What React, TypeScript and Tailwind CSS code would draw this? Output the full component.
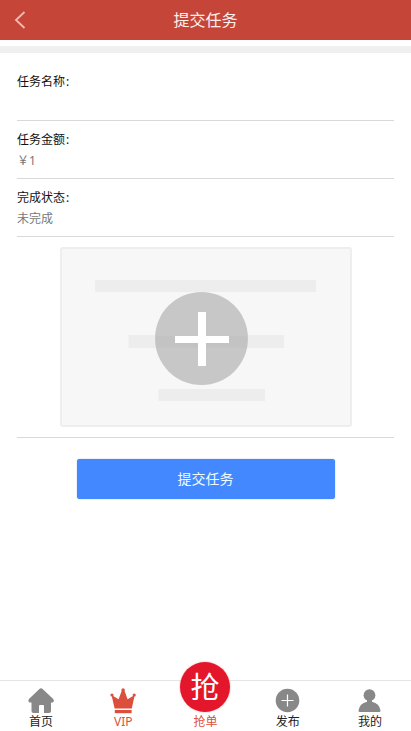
import React from "react";

function Field({ label, value }: { label: string; value: string }) {
  return (
    <div className="h-[58px] border-b border-[#d9d9d9] pt-[8px] text-[12px] leading-[21px]">
      <div className="text-[#111]">
        {label}
        <span className="ml-px font-['Noto_Sans']">:</span>
      </div>
      <div className="text-[#777]">{value}</div>
    </div>
  );
}

function UploadArt() {
  return (
    <svg width="292" height="180" viewBox="0 0 292 180" className="block">
      <rect x="1" y="1" width="290" height="178" rx="2" fill="#f7f7f7" stroke="#eeeeee" strokeWidth="2" />
      <path d="M35 33h221v12H35zM68.500 88h155.500v13H68.500zM98.500 142h106.500v12H98.500z" fill="#ededed" />
      <circle cx="141.500" cy="91.500" r="46.500" fill="#c7c7c7" />
      <path d="M96 89h91v11.500H96z" fill="#c3c3c3" />
      <path d="M138 65h8v24h23v7h-23v23h-8V96h-23v-7h23z" fill="#fff" />
    </svg>
  );
}

function HomeIcon() {
  return (
    <svg width="26" height="26" viewBox="0 0 26 26">
      <path d="M11.400 1Q13 -.500 14.600 1L25 10.800Q26.800 13 24.800 14.500H23V23Q23 25 21 25H16V18Q16 17 15 17H12Q11 17 11 18V25H5.500Q3.500 25 3.500 23V14.500H1.500Q-.600 13 1.200 10.800Z" fill="#888" />
    </svg>
  );
}

function CrownIcon() {
  return (
    <svg width="26" height="26" viewBox="0 0 26 26" fill="#dc4f3d">
      <path d="M1.500 7 8.600 11.300 12 2h2.200l3.400 9.300L24.700 7 21.800 20.500H4.600Z" />
      <circle cx="2" cy="7" r="1.600" />
      <circle cx="13.100" cy="1.900" r="1.700" />
      <circle cx="24.200" cy="7" r="1.600" />
      <path d="M4.800 22h16.800v3.200H4.800z" />
    </svg>
  );
}

function PublishIcon() {
  return (
    <svg width="26" height="26" viewBox="0 0 26 26">
      <circle cx="12.500" cy="12.500" r="11.800" fill="#888" />
      <path d="M12.500 6.500v12M6.500 12.500h12" stroke="#fff" strokeWidth="1.200" />
    </svg>
  );
}

function UserIcon() {
  return (
    <svg width="26" height="26" viewBox="0 0 26 26" fill="#888">
      <circle cx="12.500" cy="7.200" r="5.900" />
      <path d="M10 11.500h5v2.200Q22.500 15.500 23.500 22.500q.1 1.400-1 1.400H2.500q-1.100 0-1-1.400Q2.500 15.500 10 13.700z" />
    </svg>
  );
}

function Tab({ label, icon, active }: { label: string; icon: React.ReactNode; active?: boolean }) {
  return (
    <div className={"flex flex-1 flex-col items-center pt-[7px] " + (active ? "text-[#dc4f3d]" : "text-[#222]")}>
      {icon}
      <span className="text-[12px] leading-4">{label}</span>
    </div>
  );
}

export default function App() {
  return (
    <div className="flex h-[731px] w-[411px] flex-col overflow-hidden bg-white font-['Noto_Sans','Noto_Sans_CJK_SC',sans-serif]">
      <header className="flex h-10 shrink-0 items-center bg-[#c54638]">
        <div className="w-12 pl-[14px]">
          <svg width="12" height="18" viewBox="0 0 12 18" fill="none" stroke="#f3b9b2" strokeWidth="1.800">
            <path d="M10.500 1 2 9l8.500 8" />
          </svg>
        </div>
        <h1 className="flex-1 text-center text-[16px] leading-6 text-[#fff0ee]">提交任务</h1>
        <div className="w-12" />
      </header>
      <div className="mt-[6px] h-[7px] shrink-0 bg-[#f0f0f0]" />
      <main className="flex-1 px-[17px] pt-[10px]">
        <Field label="任务名称" value="" />
        <Field label="任务金额" value="￥1" />
        <Field label="完成状态" value="未完成" />
        <div className="flex h-[201px] justify-center border-b border-[#d9d9d9] pt-[10px]">
          <UploadArt />
        </div>
        <button className="mx-auto mt-[21px] block h-10 w-[258px] rounded-[3px] bg-[#4388ff] pb-[2px] text-[14px] text-[#f0fbff] shadow-[0_0_1px_#4f78b8]">
          提交任务
        </button>
      </main>
      <nav className="flex h-[51px] shrink-0 border-t border-[#e5e5e5]">
        <Tab label="首页" icon={<HomeIcon />} />
        <Tab label="VIP" icon={<CrownIcon />} active />
        <div className="flex flex-1 flex-col items-center text-[#dc4f3d]">
          <div className="-mt-[19px] mr-px flex h-[50px] w-[50px] shrink-0 items-center justify-center rounded-full bg-[#e3162c] text-[29px] leading-[50px] text-white shadow-[0_0_2px_#f5a0a0]">
            抢
          </div>
          <span className="mt-[2px] text-[12px] leading-4">抢单</span>
        </div>
        <Tab label="发布" icon={<PublishIcon />} />
        <Tab label="我的" icon={<UserIcon />} />
      </nav>
    </div>
  );
}
